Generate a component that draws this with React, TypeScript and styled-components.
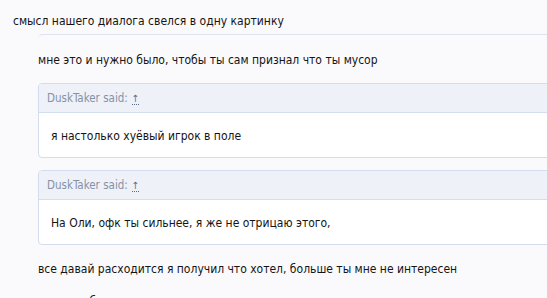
import styled, { createGlobalStyle } from 'styled-components';

const GlobalStyle = createGlobalStyle`
  html, body {
    margin: 0;
    padding: 0;
    overflow: hidden;
    background: #fafafc;
  }
`;

const Post = styled.div`
  width: 640px;
  padding: 13px 0 0 13px;
  font-family: 'DejaVu Sans Condensed', 'DejaVu Sans', sans-serif;
  font-stretch: condensed;
  font-size: 12px;
  color: #141414;
`;

const Line = styled.div<{ $gap?: number }>`
  line-height: 16px;
  margin-top: ${(p) => p.$gap ?? 0}px;
`;

const Reply = styled.div`
  margin: 5px 0 0 25px;
  padding-top: 17px;
  border-top: 1px solid #dce4ef;
  border-top-left-radius: 5px;
`;

const Quote = styled.div<{ $gap: number }>`
  margin-top: ${(p) => p.$gap}px;
  border: 1px solid #d3dded;
  border-radius: 4px;
  background: #fff;
  overflow: hidden;
`;

const QuoteHead = styled.div`
  height: 28px;
  line-height: 28px;
  padding-left: 8px;
  background: #eef1f7;
  border-bottom: 1px solid #d3dded;
  color: #8592a6;
  font-size: 11.5px;
`;

const UpLink = styled.span`
  margin-left: 4px;
  color: #5c6b84;
  border-bottom: 1px dotted #5c6b84;
  font-size: 10px;
`;

const QuoteBody = styled.div`
  padding: 15px 12px 13px;
  line-height: 16px;
`;

const quotes = [
  { author: 'DuskTaker', text: 'я настолько хуёвый игрок в поле', gap: 15 },
  { author: 'DuskTaker', text: 'На Оли, офк ты сильнее, я же не отрицаю этого,', gap: 12 },
];

export default function App() {
  return (
    <>
      <GlobalStyle />
      <Post>
        <Line>смысл нашего диалога свелся в одну картинку</Line>
        <Reply>
          <Line>мне это и нужно было, чтобы ты сам признал что ты мусор</Line>
          {quotes.map((q, i) => (
            <Quote key={i} $gap={q.gap}>
              <QuoteHead>
                {q.author} said:<UpLink>↑</UpLink>
              </QuoteHead>
              <QuoteBody>{q.text}</QuoteBody>
            </Quote>
          ))}
          <Line $gap={16}>все давай расходится я получил что хотел, больше ты мне не интересен</Line>
          <Line $gap={16}>ну и сам бывает</Line>
        </Reply>
      </Post>
    </>
  );
}
